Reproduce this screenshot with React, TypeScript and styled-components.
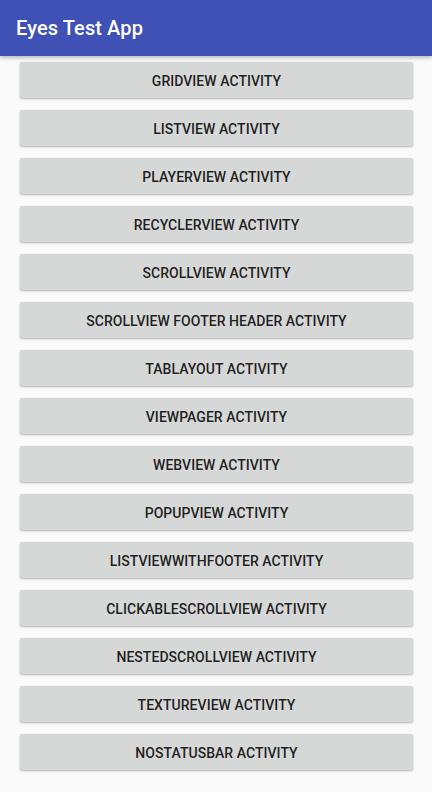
import React from "react";
import styled, { createGlobalStyle } from "styled-components";

const Global = createGlobalStyle`
  html, body { margin: 0; padding: 0; background: #fafafa; }
  body { font-family: Roboto, "Noto Sans", sans-serif; }
  * { box-sizing: border-box; }
`;

const Screen = styled.div`
  width: 432px;
  height: 792px;
  background: #fafafa;
  display: flex;
  flex-direction: column;
  overflow: hidden;
`;

const AppBar = styled.header`
  height: 56px;
  flex: none;
  background: #3f51b5;
  display: flex;
  align-items: center;
  padding-left: 16px;
  box-shadow: 0 2px 4px rgba(0, 0, 0, 0.25);
  position: relative;
  z-index: 1;
`;

const Title = styled.h1`
  margin: 0;
  color: #ffffff;
  font-family: Roboto, sans-serif;
  font-weight: 500;
  font-size: 20px;
  letter-spacing: 0.1px;
`;

const List = styled.div`
  display: flex;
  flex-direction: column;
  padding: 6px 19px 0 20px;
  gap: 12px;
`;

const Button = styled.button`
  height: 36px;
  border: none;
  border-radius: 2px;
  background: #d6d7d7;
  color: rgba(0, 0, 0, 0.87);
  font-family: Roboto, sans-serif;
  font-weight: 500;
  font-size: 14px;
  letter-spacing: 0.04px;
  text-transform: uppercase;
  display: flex;
  align-items: center;
  justify-content: center;
  padding: 2px 8px 0;
  box-shadow: 0 1px 2px rgba(0, 0, 0, 0.22), 0 1px 3px rgba(0, 0, 0, 0.08);
  cursor: pointer;
`;

const items = [
  "GridView Activity",
  "ListView Activity",
  "PlayerView Activity",
  "RecyclerView Activity",
  "ScrollView Activity",
  "ScrollView Footer Header Activity",
  "TabLayout Activity",
  "ViewPager Activity",
  "WebView Activity",
  "PopupView Activity",
  "ListViewWithFooter Activity",
  "ClickableScrollView Activity",
  "NestedScrollView Activity",
  "TextureView Activity",
  "NoStatusBar Activity",
];

export default function App() {
  return (
    <>
      <Global />
      <Screen>
        <AppBar>
          <Title>Eyes Test App</Title>
        </AppBar>
        <List>
          {items.map((t) => (
            <Button key={t}>{t}</Button>
          ))}
        </List>
      </Screen>
    </>
  );
}
